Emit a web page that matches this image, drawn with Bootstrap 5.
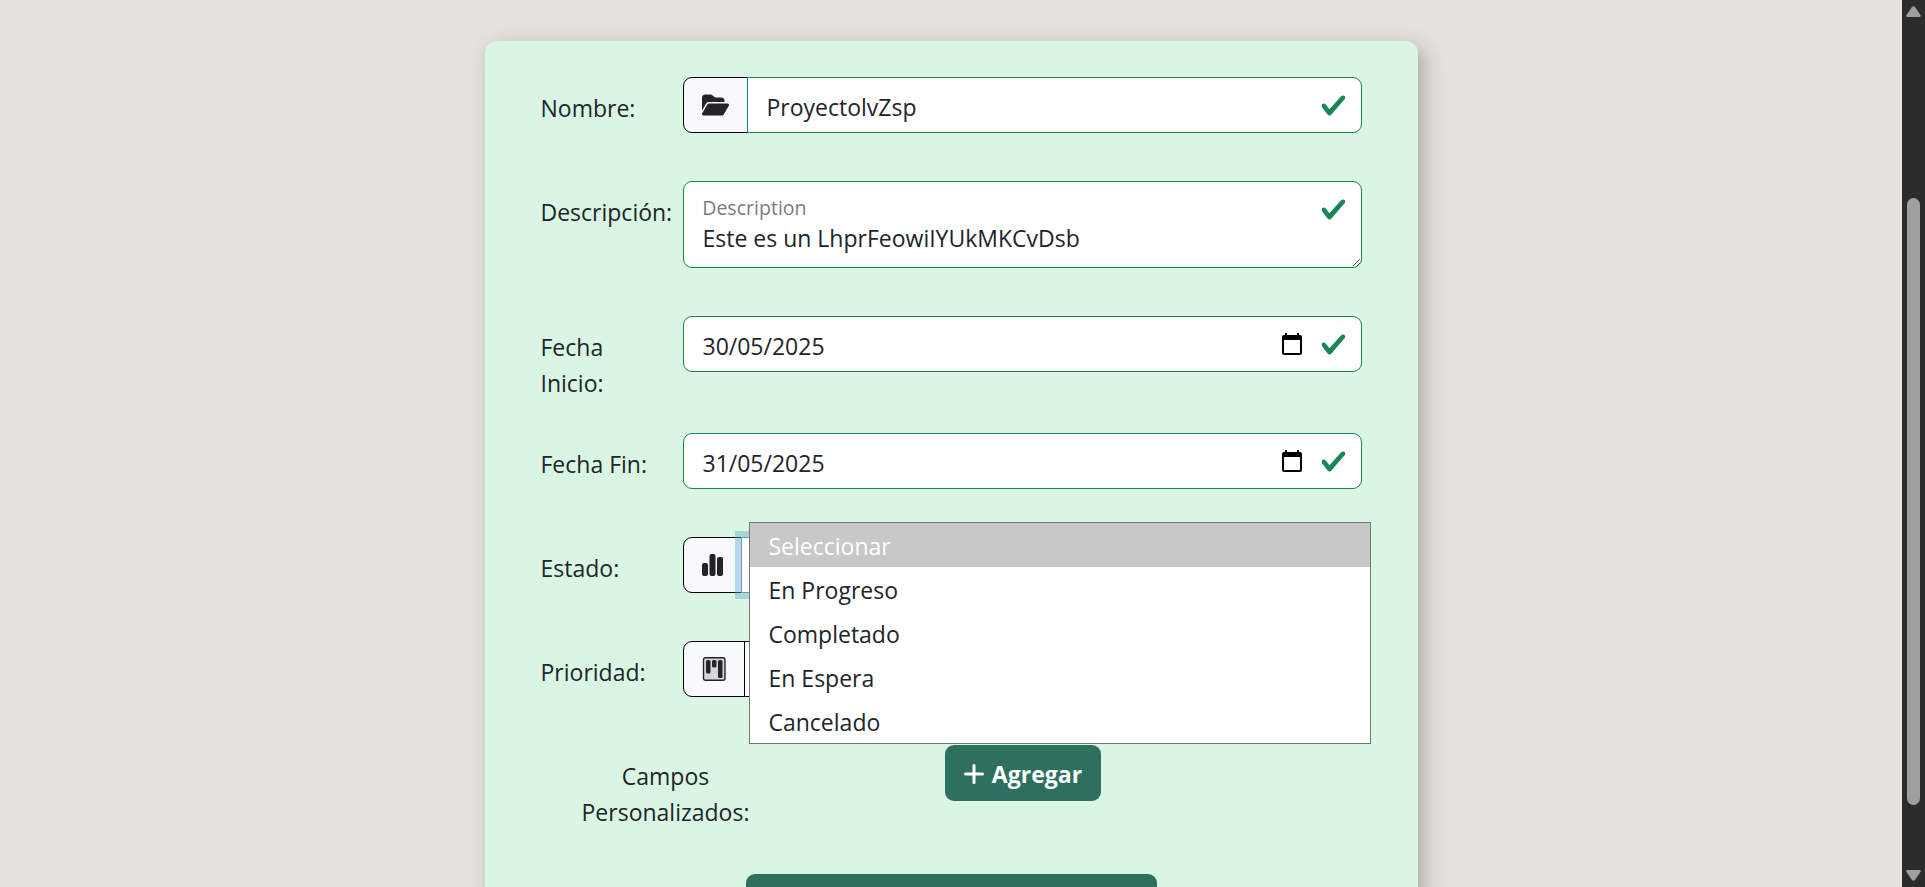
<!DOCTYPE html>
<html lang="es">
<head>
<meta charset="utf-8">
<meta name="viewport" content="width=device-width, initial-scale=1">
<title>Proyecto</title>
<link href="https://cdn.jsdelivr.net/npm/bootstrap@5.3.0/dist/css/bootstrap.min.css" rel="stylesheet">
<style>
html{font-size:24px}
body{font-family:"Open Sans","Noto Sans",sans-serif;font-size:23px;line-height:36px;background:#e3e2dd;color:#212529}
.project-card{background:#daf5e4;border-radius:12px;padding:36px 55px 36px 56px;margin-top:41px;box-shadow:6px 6px 20px rgba(0,0,0,.25)}
.page-gutter{padding-left:18px;padding-right:18px}
.field-row{--bs-gutter-x:36px;margin-bottom:32px}
.field-label{padding-top:13px;line-height:36px}
.field-box{padding-bottom:16px}
.form-control,.form-select,.input-group-text{font-size:23px;line-height:36px;color:#212529}
.form-control,.form-select{height:56px}
.form-control{padding-top:11px;padding-bottom:7px}
.form-control.is-valid{background-size:27px 27px;background-position:right 14px center}
.input-group-text{background:#f8f9fc;border-color:#000}
.form-select{border-color:#000}
.select-open,.select-open:focus{border-color:#56a5bd;box-shadow:0 0 0 6px rgba(98,170,204,.42);z-index:5}
.form-floating>.note-area.is-valid{height:87px;min-height:87px;padding-top:38px;padding-bottom:8px;line-height:36px;background-position:right 14px top 14px}
.form-floating>.note-area:not(:placeholder-shown)~.note-label{color:#7a7c7f;opacity:1;padding-top:24px}
.date-toggle{right:60px;top:17px;z-index:6;line-height:1}
.option-menu{top:-15px;left:67px;right:-9px;z-index:10;background:#fff;border:1px solid #767676}
.option-item{height:44px;line-height:46px;padding-left:18px}
.option-item.picked{background:#c8c8c8;color:#fff}
.btn-forest,.btn-forest:hover{background:#2d7060;color:#fff;border:0;border-radius:9px;min-height:56px;font-size:23px;font-weight:700;line-height:36px;padding:11px 19px 9px}
.add-gap{gap:8px}
.scroll-rail{width:23px;padding:6px 0;background:#2c2c2c}
.rail-above{flex:181 0 0}
.scroll-thumb{flex:607 0 0;width:13px;border-radius:7px;background:#9f9f9f}
.rail-below{flex:65 0 0}
</style>
</head>
<body>
<div class="d-flex vh-100 overflow-hidden">
<main class="flex-grow-1 container-fluid page-gutter">
<div class="row g-0 justify-content-center">
<div class="col-6">
<form class="project-card">
<div class="row field-row">
<label class="col-2 field-label" for="nombre">Nombre:</label>
<div class="col-10 field-box">
<div class="input-group">
<span class="input-group-text"><svg width="27" height="24" viewBox="0 0 576 512" fill="currentColor" aria-hidden="true"><path d="M88.700 223.800L0 375.800V96C0 60.700 28.700 32 64 32H181.500c17 0 33.300 6.700 45.300 18.700l26.500 26.500c12 12 28.300 18.700 45.300 18.700H416c35.300 0 64 28.700 64 64v32H144c-22.800 0-43.800 12.100-55.300 31.800zm27.600 16.100C122.100 230 132.600 224 144 224H544c11.500 0 22 6.100 27.700 16.100s5.700 22.200-.1 32.100l-112 192C453.900 474 443.400 480 432 480H32c-11.500 0-22-6.100-27.700-16.100s-5.700-22.200 .1-32.100l112-192z"/></svg></span>
<input class="form-control is-valid" id="nombre" type="text" value="ProyectolvZsp">
</div>
</div>
</div>
<div class="row field-row">
<label class="col-2 field-label" for="descripcion">Descripción:</label>
<div class="col-10 field-box">
<div class="form-floating">
<textarea class="form-control is-valid note-area" id="descripcion" placeholder="Description">Este es un LhprFeowiIYUkMKCvDsb</textarea>
<label class="note-label" for="descripcion">Description</label>
</div>
</div>
</div>
<div class="row field-row">
<label class="col-2 field-label" for="inicio">Fecha Inicio:</label>
<div class="col-10 field-box">
<div class="position-relative">
<input class="form-control is-valid" id="inicio" type="text" inputmode="numeric" value="30/05/2025">
<button class="btn p-0 border-0 position-absolute date-toggle d-flex" type="button" aria-label="Abrir calendario"><svg width="20" height="22" viewBox="0 0 20 22" aria-hidden="true"><path fill="#000" fill-rule="evenodd" d="M3 0h2v2h10V0h2v2h1a2 2 0 0 1 2 2v16a2 2 0 0 1-2 2H2a2 2 0 0 1-2-2V4a2 2 0 0 1 2-2h1zM2 7v13h16V7z"/></svg></button>
</div>
</div>
</div>
<div class="row field-row">
<label class="col-2 field-label" for="fin">Fecha Fin:</label>
<div class="col-10 field-box">
<div class="position-relative">
<input class="form-control is-valid" id="fin" type="text" inputmode="numeric" value="31/05/2025">
<button class="btn p-0 border-0 position-absolute date-toggle d-flex" type="button" aria-label="Abrir calendario"><svg width="20" height="22" viewBox="0 0 20 22" aria-hidden="true"><path fill="#000" fill-rule="evenodd" d="M3 0h2v2h10V0h2v2h1a2 2 0 0 1 2 2v16a2 2 0 0 1-2 2H2a2 2 0 0 1-2-2V4a2 2 0 0 1 2-2h1zM2 7v13h16V7z"/></svg></button>
</div>
</div>
</div>
<div class="row field-row">
<label class="col-2 field-label" for="estado">Estado:</label>
<div class="col-10 field-box">
<div class="input-group">
<span class="input-group-text"><svg width="21" height="24" viewBox="0 0 21 24" fill="currentColor" aria-hidden="true"><rect y="10" width="6" height="13" rx="2"/><rect x="7.500" y="1" width="6" height="22" rx="2"/><rect x="15" y="4" width="6" height="19" rx="2"/></svg></span>
<select class="form-select select-open" id="estado"><option></option><option>En Progreso</option><option>Completado</option><option>En Espera</option><option>Cancelado</option></select>
<div class="option-menu position-absolute" role="listbox" aria-label="Estado">
<div class="option-item picked" role="option" aria-selected="true">Seleccionar</div>
<div class="option-item" role="option">En Progreso</div>
<div class="option-item" role="option">Completado</div>
<div class="option-item" role="option">En Espera</div>
<div class="option-item" role="option">Cancelado</div>
</div>
</div>
</div>
</div>
<div class="row field-row">
<label class="col-2 field-label" for="prioridad">Prioridad:</label>
<div class="col-10 field-box">
<div class="input-group">
<span class="input-group-text"><svg width="24" height="24" viewBox="0 0 24 24" aria-hidden="true"><rect x="1.500" y=".7" width="21.500" height="22.600" rx="2" fill="#d5d7da" stroke="#212529" stroke-width="1.400"/><g fill="#212529"><rect x="4" y="3" width="4.500" height="13.500" rx="1.500"/><rect x="10" y="3" width="4.500" height="7.500" rx="1.500"/><rect x="16" y="3" width="4.500" height="18" rx="1.500"/></g></svg></span>
<select class="form-select" id="prioridad"><option></option></select>
</div>
</div>
</div>
<div class="row field-row">
<div class="col-4 field-label text-center">Campos<br>Personalizados:</div>
<div class="col-6 text-center">
<button class="btn btn-forest d-inline-flex align-items-center add-gap" type="button"><svg width="20" height="20" viewBox="0 0 20 20" stroke="#fff" stroke-width="3" stroke-linecap="round" aria-hidden="true"><path d="M10 1.500v17M1.500 10h17"/></svg>Agregar</button>
</div>
</div>
<div class="d-flex justify-content-center pt-2"><button class="btn btn-forest w-50" type="submit" aria-label="Guardar"></button></div>
</form>
</div>
</div>
</main>
<div class="scroll-rail flex-shrink-0 d-flex flex-column align-items-center" aria-hidden="true">
<svg class="flex-shrink-0" width="15" height="11" viewBox="0 0 15 11"><path fill="#9f9f9f" d="M6 1q1.500-1.500 3 0l5.500 8q.8 2-1 2h-12q-1.800 0-1-2z"/></svg>
<div class="rail-above"></div>
<div class="scroll-thumb"></div>
<div class="rail-below"></div>
<svg class="flex-shrink-0" width="15" height="11" viewBox="0 0 15 11"><path fill="#9f9f9f" d="M6 10q1.500 1.500 3 0l5.500-8q.8-2-1-2h-12q-1.800 0-1 2z"/></svg>
</div>
</div>
<script src="https://cdn.jsdelivr.net/npm/bootstrap@5.3.0/dist/js/bootstrap.bundle.min.js"></script>
</body>
</html>
